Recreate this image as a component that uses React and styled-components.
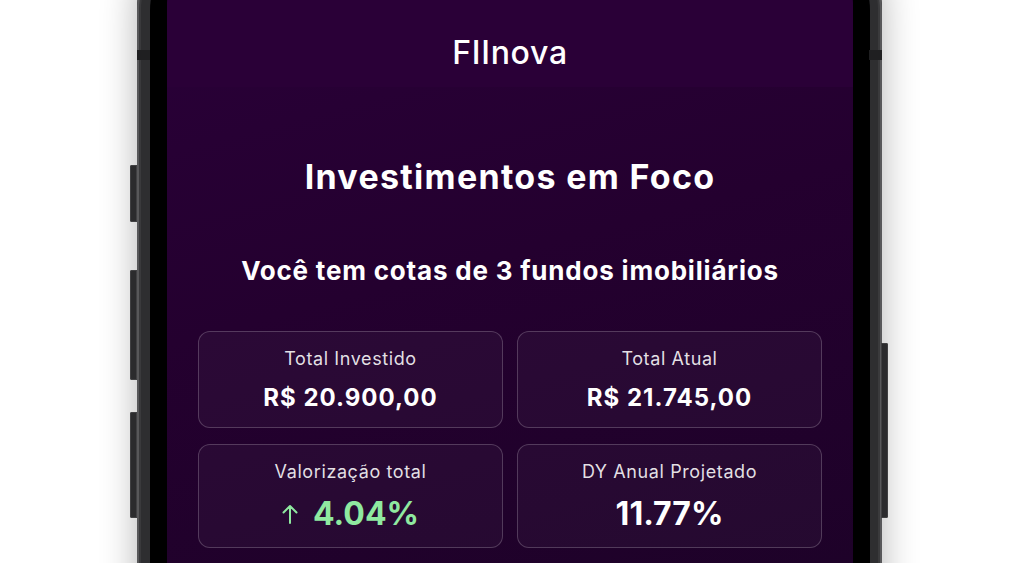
import React from "react";
import styled, { createGlobalStyle } from "styled-components";

const Global = createGlobalStyle`
  html, body { margin: 0; padding: 0; background: #ffffff; overflow: hidden; }
  body { font-family: Inter, "Noto Sans", sans-serif; -webkit-font-smoothing: antialiased; }
`;

const Stage = styled.div`
  width: 1024px;
  height: 563px;
  overflow: hidden;
  display: flex;
  align-items: flex-start;
  padding-left: 137px;
  box-sizing: border-box;
  background: #ffffff;
`;

const Phone = styled.div`
  position: relative;
  flex: none;
  margin-top: -70px;
  width: 745px;
  height: 1400px;
  box-sizing: border-box;
  padding: 13px 12px 0 13px;
  border-radius: 80px;
  background: #2e2e30;
  box-shadow: inset 0 0 0 2px #58585a, inset 0 0 0 4px #3a3a3c, 0 0 36px rgba(0, 0, 0, 0.3);
`;

const Antenna = styled.div`
  position: absolute;
  top: 120px;
  ${(p) => (p.$side === "left" ? "left: 0;" : "right: 0;")}
  width: 13px;
  height: 10px;
  background: #1f1f21;
`;

const SideButton = styled.div`
  position: absolute;
  top: ${(p) => p.$top}px;
  height: ${(p) => p.$h}px;
  width: 7px;
  ${(p) =>
    p.$side === "left"
      ? "left: -7px; border-radius: 2px 0 0 2px;"
      : "right: -6px; border-radius: 0 2px 2px 0;"}
  background: #2b2b2d;
  box-shadow: inset 0 0 0 1px #404042;
`;

const Bezel = styled.div`
  height: 100%;
  box-sizing: border-box;
  padding: 17px;
  border-radius: 67px 67px 0 0;
  background: #000000;
`;

const Screen = styled.div`
  height: 100%;
  border-radius: 46px 46px 0 0;
  overflow: hidden;
  display: flex;
  flex-direction: column;
  background: linear-gradient(165deg, #2a0039 0%, #24002f 25%, #1d0228 55%, #170321 100%);
`;

const Header = styled.header`
  height: 127px;
  flex: none;
  box-sizing: border-box;
  display: flex;
  align-items: flex-end;
  justify-content: center;
  padding-bottom: 18px;
  background: #2a0037;
`;

const Brand = styled.h1`
  margin: 0;
  font-size: 32px;
  line-height: 32px;
  font-weight: 500;
  color: #ffffff;
  letter-spacing: 0.7px;
`;

const Main = styled.main`
  display: flex;
  flex-direction: column;
  align-items: center;
  padding: 0 31px;
`;

const Title = styled.h2`
  margin: 70px 0 0;
  font-size: 34px;
  line-height: 1.2;
  font-weight: 700;
  color: #ffffff;
  letter-spacing: 1.3px;
`;

const Subtitle = styled.h3`
  margin: 57px 0 0;
  font-size: 26px;
  line-height: 1.2;
  font-weight: 700;
  color: #ffffff;
  letter-spacing: 0.8px;
`;

const Grid = styled.section`
  margin-top: 45px;
  width: 100%;
  display: grid;
  grid-template-columns: 1fr 1fr;
  column-gap: 14px;
  row-gap: 16px;
`;

const Card = styled.div`
  border: 1px solid rgba(255, 255, 255, 0.2);
  border-radius: 12px;
  background: rgba(255, 255, 255, 0.035);
  padding: 16px 12px 15px;
  display: flex;
  flex-direction: column;
  align-items: center;
  gap: 13px;
`;

const Label = styled.div`
  font-size: 18px;
  line-height: 22px;
  font-weight: 400;
  color: rgba(255, 255, 255, 0.88);
  letter-spacing: 0.6px;
`;

const Value = styled.div`
  display: flex;
  align-items: center;
  gap: 15px;
  font-size: ${(p) => (p.$big ? 32 : 24)}px;
  line-height: ${(p) => (p.$big ? 36 : 29)}px;
  font-weight: 700;
  letter-spacing: ${(p) => (p.$big ? 0 : 1)}px;
  color: ${(p) => (p.$positive ? "#8fe9a0" : "#ffffff")};
`;

const UpArrow = () => (
  <svg width="16" height="20" viewBox="0 0 16 20" fill="none" aria-hidden="true">
    <path
      d="M8 19V2M1.5 8.5L8 2l6.5 6.5"
      stroke="#8fe9a0"
      strokeWidth="2"
      strokeLinecap="round"
      strokeLinejoin="round"
    />
  </svg>
);

const stats = [
  { label: "Total Investido", value: "R$ 20.900,00" },
  { label: "Total Atual", value: "R$ 21.745,00" },
  { label: "Valorização total", value: "4.04%", big: true, positive: true },
  { label: "DY Anual Projetado", value: "11.77%", big: true },
];

export default function App() {
  return (
    <>
      <Global />
      <Stage>
        <Phone>
          <Antenna $side="left" />
          <Antenna $side="right" />
          <SideButton $side="left" $top={235} $h={57} />
          <SideButton $side="left" $top={340} $h={110} />
          <SideButton $side="left" $top={482} $h={106} />
          <SideButton $side="right" $top={413} $h={175} />
          <Bezel>
            <Screen>
              <Header>
                <Brand>FIInova</Brand>
              </Header>
              <Main>
                <Title>Investimentos em Foco</Title>
                <Subtitle>Você tem cotas de 3 fundos imobiliários</Subtitle>
                <Grid>
                  {stats.map((s) => (
                    <Card key={s.label}>
                      <Label>{s.label}</Label>
                      <Value $big={s.big} $positive={s.positive}>
                        {s.positive && <UpArrow />}
                        <span>{s.value}</span>
                      </Value>
                    </Card>
                  ))}
                </Grid>
              </Main>
            </Screen>
          </Bezel>
        </Phone>
      </Stage>
    </>
  );
}
